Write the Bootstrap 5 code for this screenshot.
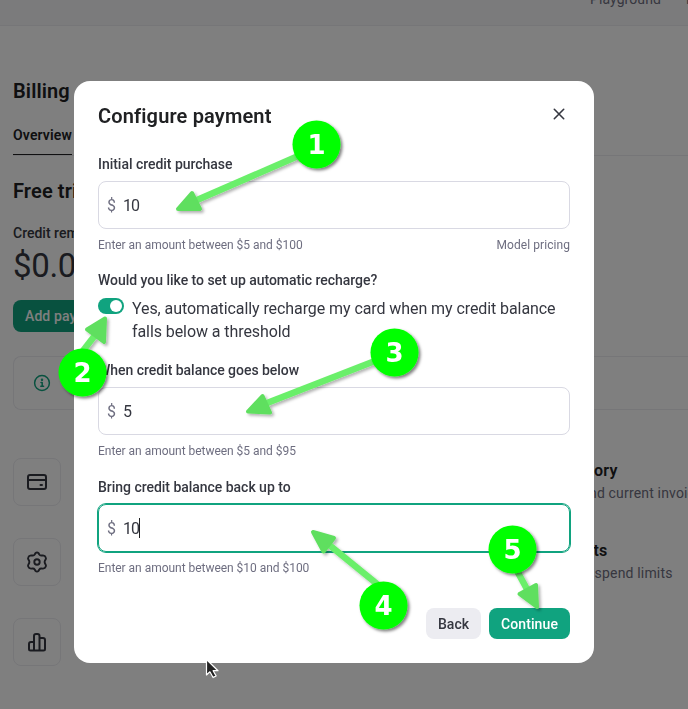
<!DOCTYPE html>
<html lang="en">
<head>
<meta charset="utf-8">
<meta name="viewport" content="width=device-width, initial-scale=1">
<title>Billing – Configure payment</title>
<link href="https://cdn.jsdelivr.net/npm/bootstrap@5.3.0/dist/css/bootstrap.min.css" rel="stylesheet">
<style>
  body { font-family: Roboto, "Liberation Sans", sans-serif; font-size: 14px; line-height: 20px; color: #353740; overflow: hidden; height: 100vh; }
  .topbar { height: 26px; background: #f7f7f8; border-bottom: 1px solid #ececf1; overflow: hidden; padding-left: 590px; gap: 25px; }
  .topbar a { color: #6e6e80; text-decoration: none; white-space: nowrap; margin-top: -11px; letter-spacing: .09px; }
  .page-main { padding: 52px 0 0 13px; overflow: hidden; }
  .page-title, .section-title { font-size: 20px; line-height: 26px; font-weight: 600; color: #202123; letter-spacing: .12px; margin: 0; }
  .tabs { margin-top: 20px; border-bottom: 1px solid #ececf1; height: 32px; }
  .tabs a { display: block; width: 59px; height: 31px; border-bottom: 1px solid #202123; color: #202123; font-weight: 600; text-decoration: none; letter-spacing: .15px; line-height: 22px; }
  .section-title { margin-top: 22px; }
  .credit-label { margin-top: 19px; font-weight: 500; }
  .credit-value { font-size: 33px; line-height: 40px; margin-top: 3px; letter-spacing: -.35px; }
  .btn-brand { background: #10a37f; border: 0; color: #fff; }
  .page-main .btn-brand { margin-top: 14px; height: 32px; border-radius: 8px; padding: 0 12px; font-size: 14px; font-weight: 500; letter-spacing: .1px; white-space: nowrap; }
  .notice { margin-top: 24px; height: 54px; border: 1px solid #ececf1; border-right: 0; border-radius: 8px 0 0 8px; padding-left: 19px; }
  .tiles { margin-top: 48px; display: grid; grid-template-columns: 502px 1fr; row-gap: 32px; }
  .tile { width: 48px; height: 48px; border: 1px solid #ececf1; border-radius: 8px; color: #353740; }
  .tile-text { height: 48px; white-space: nowrap; }
  .tile-text h3 { font-size: 16px; line-height: 24px; font-weight: 600; color: #202123; margin: 1px 0 0; letter-spacing: .3px; }
  .tile-text p { margin: 0; line-height: 20px; color: #6e6e80; letter-spacing: .17px; }
  .scrim { position: fixed; inset: 0; background: rgba(0,0,0,.5); padding: 81px 0 0 74px; }
  .pay-dialog { width: 520px; height: 582px; border: 0; border-radius: 16px; padding: 23px 24px 24px; }
  .pay-dialog h2 { font-size: 20px; line-height: 24px; font-weight: 600; color: #202123; letter-spacing: .15px; margin: 0; }
  .close-btn { border: 0; background: none; padding: 0; width: 22px; height: 22px; color: #353740; margin-top: -1px; }
  .f-label { font-weight: 500; line-height: 20px; margin: 17px 0 0; display: block; letter-spacing: -.03px; }
  .f-label.first-field { margin-top: 26px; }
  .f-label.recharge { margin-top: 16px; }
  .recharge-row { margin-top: 7px; }
  .money { height: 48px; border: 1px solid #d9d9e3; border-radius: 8px; margin-top: 7px; padding: 2px 8px 0; font-size: 16px; }
  .money .cur { color: #6e6e80; width: 16px; }
  .money.active { border-color: #10a37f; box-shadow: 0 0 0 1px #10a37f; }
  .money .val { letter-spacing: -1px; }
  .caret { width: 1px; height: 20px; background: #202123; margin-top: -2px; }
  .hint { font-size: 12px; line-height: 18px; color: #6e6e80; margin-top: 7px; letter-spacing: -.03px; }
  .hint a { color: inherit; text-decoration: none; letter-spacing: .07px; }
  .switch { width: 26px; height: 16px; border-radius: 8px; background: #10a37f; padding: 2px; margin-top: 1px; flex: none; }
  .switch span { width: 12px; height: 12px; border-radius: 50%; background: #fff; }
  .auto-text { font-size: 16px; line-height: 23px; letter-spacing: -.08px; white-space: nowrap; }
  .pay-dialog .btn { height: 31px; border-radius: 8px; border: 0; padding: 1px 0 0; font-size: 14px; font-weight: 500; line-height: 30px; }
  .btn-back { width: 55px; background: #ececf1; color: #353740; }
  .btn-go { width: 81px; letter-spacing: .1px; }
  .annot { position: fixed; left: 0; top: 0; pointer-events: none; }
</style>
<script src="https://cdn.jsdelivr.net/npm/bootstrap@5.3.0/dist/js/bootstrap.bundle.min.js"></script>
</head>
<body>
<nav class="topbar d-flex"><a href="#">Playground</a><a href="#">Help</a></nav>
<main class="page-main">
  <h1 class="page-title">Billing</h1>
  <div class="tabs"><a href="#">Overview</a></div>
  <h2 class="section-title">Free trial</h2>
  <div class="credit-label">Credit remaining</div>
  <div class="credit-value">$0.00</div>
  <button class="btn btn-brand d-block text-start">Add payment details</button>
  <div class="notice d-flex align-items-center">
    <svg width="18" height="18" viewBox="0 0 18 18" fill="none" stroke="#10a37f" stroke-width="1.5" stroke-linecap="round" stroke-linejoin="round"><circle cx="9" cy="9" r="7.4"/><path d="M8 8.400h1.200v3.800M7.800 12.300h2.800"/><circle cx="9" cy="5.700" r=".5" fill="#10a37f"/></svg>
  </div>
  <div class="tiles">
    <div class="tile d-flex align-items-center justify-content-center">
      <svg width="24" height="24" viewBox="0 0 24 24" fill="none" stroke="currentColor" stroke-width="2" stroke-linecap="round" stroke-linejoin="round"><rect x="3" y="5" width="18" height="14" rx="2"/><path d="M3 10h18M15.500 15h1.500"/></svg>
    </div>
    <div class="tile-text"><h3>Billing history</h3><p>View past and current invoices</p></div>
    <div class="tile d-flex align-items-center justify-content-center">
      <svg width="24" height="24" viewBox="0 0 24 24" fill="none" stroke="currentColor" stroke-width="1.900" stroke-linecap="round" stroke-linejoin="round"><path d="M10.400 3.200Q12 1.600 13.600 3.200L14.300 4.500Q15 5.600 16.300 5.500L18 5.400Q20.100 5.500 20.800 7.500Q21.200 8.500 20.600 9.500L19.900 10.700Q19.300 12 19.900 13.300L20.600 14.500Q21.200 15.500 20.800 16.500Q20.100 18.500 18 18.600L16.300 18.500Q15 18.400 14.300 19.500L13.600 20.800Q12 22.400 10.400 20.800L9.700 19.500Q9 18.400 7.700 18.500L6 18.600Q3.900 18.500 3.200 16.500Q2.800 15.500 3.400 14.500L4.100 13.300Q4.700 12 4.100 10.700L3.400 9.500Q2.800 8.500 3.200 7.500Q3.900 5.500 6 5.400L7.700 5.500Q9 5.600 9.700 4.500Z"/><circle cx="12" cy="12" r="2.700"/></svg>
    </div>
    <div class="tile-text"><h3>Usage limits</h3><p>Set monthly spend limits</p></div>
    <div class="tile d-flex align-items-center justify-content-center">
      <svg width="24" height="24" viewBox="0 0 24 24" fill="none" stroke="currentColor" stroke-width="2" stroke-linejoin="round"><path d="M9 20.500V6a2 2 0 0 1 2-2h1.500a2 2 0 0 1 2 2v14.500M9 12H6a2 2 0 0 0-2 2v5a1.500 1.500 0 0 0 1.500 1.500h13A1.500 1.500 0 0 0 20 19V10a2 2 0 0 0-2-2h-3.500"/></svg>
    </div>
  </div>
</main>

<div class="scrim">
  <div class="modal-content pay-dialog bg-white" role="dialog">
    <div class="d-flex justify-content-between">
      <h2>Configure payment</h2>
      <button class="close-btn" aria-label="Close"><svg class="d-block" width="22" height="22" viewBox="0 0 22 22" stroke="currentColor" stroke-width="1.600" stroke-linecap="round"><path d="M6.300 6.300l9.400 9.400M15.700 6.300l-9.400 9.400"/></svg></button>
    </div>
    <label class="f-label first-field">Initial credit purchase</label>
    <div class="money d-flex align-items-center"><span class="cur">$</span><span class="val">10</span></div>
    <div class="hint d-flex justify-content-between"><span>Enter an amount between $5 and $100</span><a href="#">Model pricing</a></div>
    <label class="f-label recharge">Would you like to set up automatic recharge?</label>
    <div class="recharge-row d-flex gap-2">
      <div class="switch d-flex justify-content-end"><span></span></div>
      <div class="auto-text">Yes, automatically recharge my card when my credit balance<br>falls below a threshold</div>
    </div>
    <label class="f-label">When credit balance goes below</label>
    <div class="money d-flex align-items-center"><span class="cur">$</span><span class="val">5</span></div>
    <div class="hint">Enter an amount between $5 and $95</div>
    <label class="f-label">Bring credit balance back up to</label>
    <div class="money active d-flex align-items-center"><span class="cur">$</span><span class="val">10</span><span class="caret"></span></div>
    <div class="hint">Enter an amount between $10 and $100</div>
    <div class="d-flex justify-content-end gap-2 mt-auto">
      <button class="btn btn-back">Back</button>
      <button class="btn btn-brand btn-go">Continue</button>
    </div>
  </div>
</div>

<!-- numbered step markers with arrows, and the pointer -->
<svg class="annot" width="688" height="709" viewBox="0 0 688 709">
  <defs>
    <filter id="sh" x="-30%" y="-30%" width="160%" height="160%"><feDropShadow dx="2" dy="2" stdDeviation="1.500" flood-color="#000" flood-opacity=".5"/></filter>
    <filter id="sa" x="-30%" y="-30%" width="160%" height="160%"><feDropShadow dx="2" dy="2" stdDeviation="1.500" flood-color="#000" flood-opacity=".3"/></filter>
  </defs>
  <g fill="#5fdf5f" stroke="#5fdf5f" stroke-linejoin="round" stroke-width="4">
    <g filter="url(#sa)"><path d="M305 153L197 200" stroke="#6bef6b" stroke-width="6.500"/><path d="M178 209L192 193L200 209Z"/></g>
    <g filter="url(#sa)"><path d="M82 352L96 334" stroke="#6bef6b" stroke-width="6.500"/><path d="M105 318.500L87 329.500L104 342Z"/></g>
    <g filter="url(#sa)"><path d="M380 359L267 403" stroke="#6bef6b" stroke-width="6.500"/><path d="M248 411.500L262.500 396L270 412.500Z"/></g>
    <g filter="url(#sa)"><path d="M382 588L328 544" stroke="#6bef6b" stroke-width="6.500"/><path d="M313 532L334 538L323.500 551.500Z"/></g>
    <g filter="url(#sa)"><path d="M516 569L528 591" stroke="#6bef6b" stroke-width="6.500"/><path d="M537 607L519.500 594L536 585Z"/></g>
  </g>
  <g fill="#0f0" filter="url(#sh)">
    <circle cx="316.500" cy="144.500" r="24"/><circle cx="82.500" cy="372.500" r="24"/><circle cx="394.500" cy="352.500" r="24"/><circle cx="383.500" cy="605.500" r="24"/><circle cx="512.500" cy="549.500" r="24"/>
  </g>
  <g fill="#fff" font-family="'DejaVu Sans', sans-serif" font-weight="700" font-size="26" text-anchor="middle">
    <text x="316.500" y="154">1</text><text x="82.500" y="382">2</text><text x="394.500" y="361.500">3</text><text x="383.500" y="615">4</text><text x="512.500" y="559">5</text>
  </g>
  <path d="M206.500 659.500V675l3.400-3.200 3.200 5.700 3-1.600-3-5.200h4.900z" fill="#222" stroke="#fff" stroke-width="1.200" stroke-linejoin="round"/>
</svg>
</body>
</html>
